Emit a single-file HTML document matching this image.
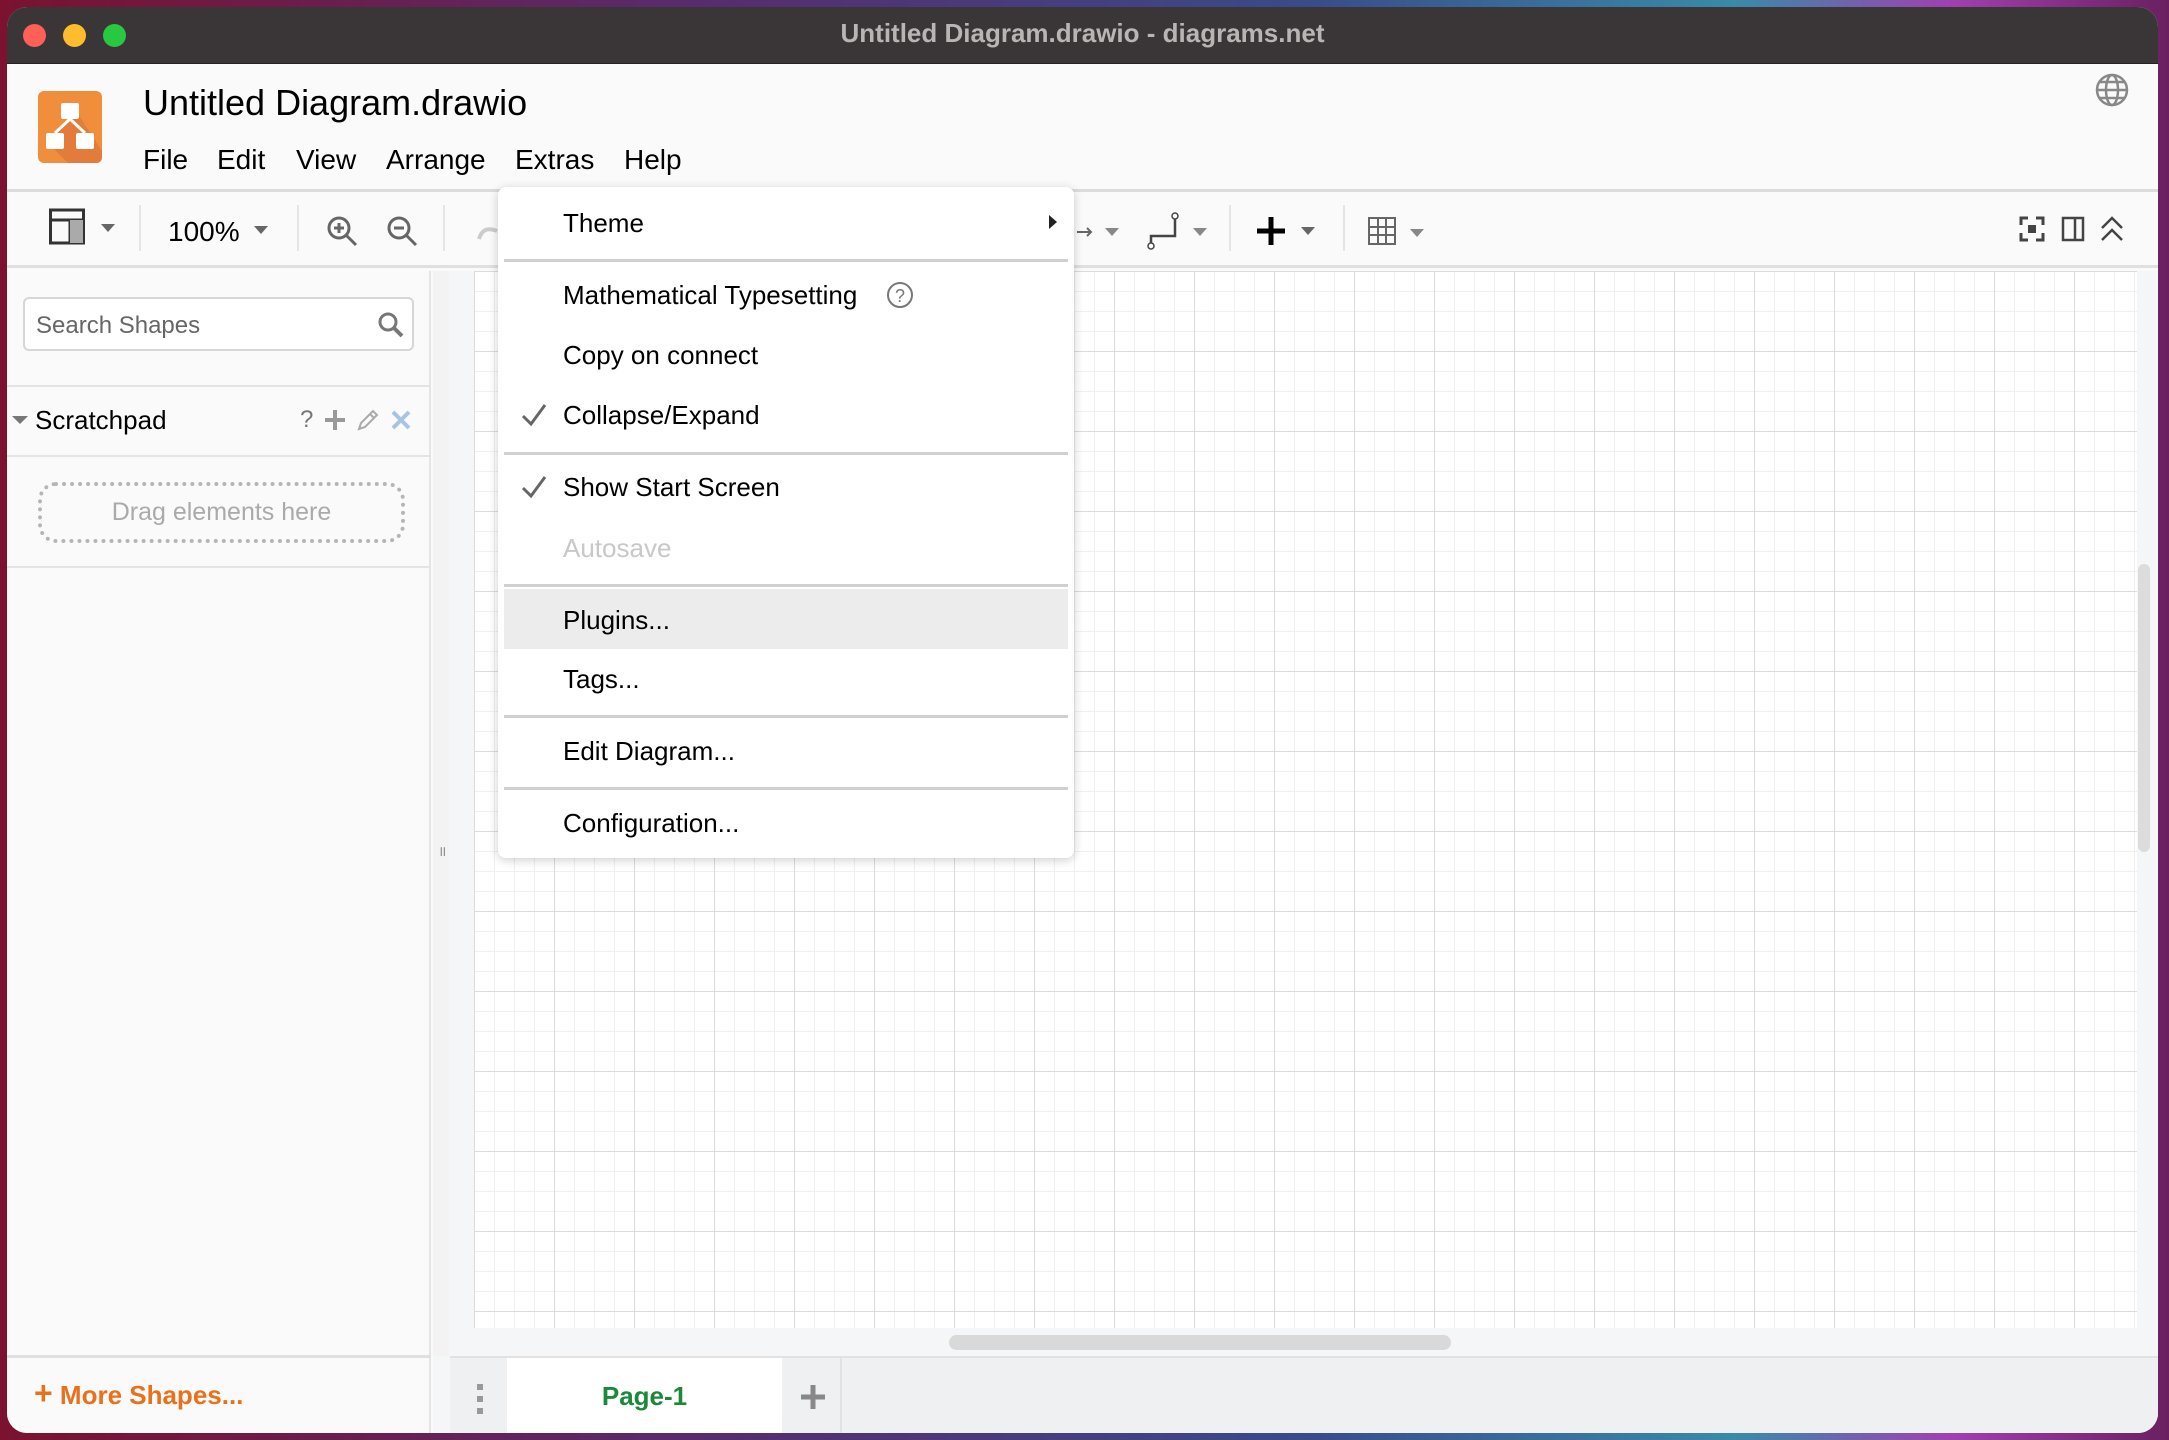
<!DOCTYPE html>
<html><head><meta charset="utf-8"><style>
*{margin:0;padding:0;box-sizing:border-box}
body{width:2169px;height:1440px;overflow:hidden;position:relative;font-family:"Liberation Sans",Arial,sans-serif;background:linear-gradient(90deg,#7a1230 0%,#5a2a6a 30%,#3a4a8a 60%,#3a8aa8 80%,#a040b0 90%,#6a2060 100%)}
.a{position:absolute}
.win{left:7px;top:7px;width:2151px;height:1426px;border-radius:20px;overflow:hidden;background:#fafafa}
.mi{position:absolute;left:65px;font-size:26px;color:#000;line-height:30px}
.sep{position:absolute;left:6px;width:564px;height:3px;background:#d0d0d0}
</style></head><body>
<div class="a win">
 <div class="a" style="left:0;top:0;width:2151px;height:57px;background:#3a3536;border-bottom:1px solid #222"></div>
 <div class="a" style="left:16px;top:17px;width:23px;height:23px;border-radius:50%;background:#fe5f57"></div>
 <div class="a" style="left:56px;top:17px;width:23px;height:23px;border-radius:50%;background:#febc2e"></div>
 <div class="a" style="left:96px;top:17px;width:23px;height:23px;border-radius:50%;background:#28c840"></div>
 <div class="a" style="left:0;top:11px;width:2151px;text-align:center;font-size:26px;font-weight:bold;color:#b9b5b5;line-height:30px">Untitled Diagram.drawio - diagrams.net</div>
 <div class="a" style="left:0;top:57px;width:2151px;height:128px;background:#fafafa;border-bottom:3px solid #dcdcdc"></div>
 <svg class="a" style="left:31px;top:84px" width="64" height="72" viewBox="0 0 64 72">
  <rect width="64" height="72" rx="6" fill="#f08e3c"/>
  <path d="M38 20 L64 60 L64 66 Q64 72 58 72 L30 72 L10 52 Z" fill="#e0783a" opacity=".8"/>
  <rect x="23" y="12" width="18" height="16" rx="2" fill="#fff"/>
  <rect x="8" y="42" width="18" height="16" rx="2" fill="#fff"/>
  <rect x="38" y="42" width="18" height="16" rx="2" fill="#fff"/>
  <path d="M32 28 L17 42 M32 28 L47 42" stroke="#fff" stroke-width="3"/>
 </svg>
 <div class="a" style="left:136px;top:75px;font-size:36px;line-height:42px;color:#000">Untitled Diagram.drawio</div>
 <div class="a" style="left:136px;top:137px;font-size:28px;line-height:32px;color:#000">
  <span class="a" style="left:0">File</span><span class="a" style="left:74px">Edit</span><span class="a" style="left:153px">View</span><span class="a" style="left:243px">Arrange</span><span class="a" style="left:372px">Extras</span><span class="a" style="left:481px">Help</span>
 </div>
 <svg class="a" style="left:2088px;top:66px" width="34" height="34" viewBox="0 0 34 34" fill="none" stroke="#888" stroke-width="2.5"><circle cx="17" cy="17" r="15"/><ellipse cx="17" cy="17" rx="6" ry="15"/><path d="M2 17H32M5 9H29M5 25H29"/></svg>
 <div class="a" style="left:0;top:188px;width:2151px;height:73px;background:#fafafa;border-bottom:3px solid #e0e0e0"></div>
 <svg class="a" style="left:42px;top:200px" width="80" height="40" viewBox="0 0 80 40"><rect x="1.5" y="3" width="33" height="33" fill="none" stroke="#333" stroke-width="3"/><path d="M1.5 13H34M21 13V36" stroke="#333" stroke-width="3"/><rect x="21" y="13" width="13" height="23" fill="#aaa"/><path d="M52 17h14l-7 8z" fill="#666"/></svg>
 <div class="a" style="left:132px;top:198px;width:2px;height:46px;background:#e5e5e5"></div>
 <div class="a" style="left:161px;top:209px;font-size:28px;line-height:32px;color:#000">100%</div>
 <svg class="a" style="left:245px;top:217px" width="20" height="12"><path d="M2 2h14l-7 8z" fill="#666"/></svg>
 <div class="a" style="left:290px;top:198px;width:2px;height:46px;background:#e5e5e5"></div>
 <svg class="a" style="left:318px;top:207px" width="36" height="36" viewBox="0 0 36 36" fill="none" stroke="#666" stroke-width="3"><circle cx="14" cy="14" r="10"/><path d="M21 21l10 10M9 14h10M14 9v10" /></svg>
 <svg class="a" style="left:378px;top:207px" width="36" height="36" viewBox="0 0 36 36" fill="none" stroke="#666" stroke-width="3"><circle cx="14" cy="14" r="10"/><path d="M21 21l10 10M9 14h10"/></svg>
 <div class="a" style="left:436px;top:198px;width:2px;height:46px;background:#e5e5e5"></div>
 <svg class="a" style="left:466px;top:210px" width="30" height="30"><path d="M6 22 Q10 8 24 14" stroke="#ccc" stroke-width="4" fill="none"/></svg>
 <svg class="a" style="left:1068px;top:211px" width="50" height="28"><path d="M2 14h14M12 10l4 4-4 4" stroke="#666" stroke-width="2" fill="none"/><path d="M30 10h14l-7 8z" fill="#888"/></svg>
 <svg class="a" style="left:1138px;top:203px" width="70" height="42"><path d="M6 38V26h24V6" stroke="#444" stroke-width="2.5" fill="none"/><circle cx="6" cy="36" r="3" fill="#fff" stroke="#444" stroke-width="1.5"/><circle cx="30" cy="6" r="3" fill="#fff" stroke="#444" stroke-width="1.5"/><path d="M48 18h14l-7 8z" fill="#888"/></svg>
 <div class="a" style="left:1222px;top:198px;width:2px;height:46px;background:#e5e5e5"></div>
 <svg class="a" style="left:1250px;top:207px" width="70" height="34"><path d="M14 3v28M0 17h28" stroke="#000" stroke-width="5"/><path d="M44 13h14l-7 8z" fill="#666"/></svg>
 <div class="a" style="left:1336px;top:198px;width:2px;height:46px;background:#e5e5e5"></div>
 <svg class="a" style="left:1361px;top:210px" width="70" height="30"><rect x="1" y="1" width="26" height="26" fill="none" stroke="#666" stroke-width="2"/><path d="M10 1v26M18 1v26M1 10h26M1 18h26" stroke="#666" stroke-width="2"/><path d="M42 12h14l-7 8z" fill="#888"/></svg>
 <svg class="a" style="left:2012px;top:209px" width="26" height="26" fill="none" stroke="#444" stroke-width="3"><path d="M2 9V2h7M17 2h7v7M24 17v7h-7M9 24H2v-7"/><rect x="9" y="9" width="8" height="8" fill="#444" stroke="none"/></svg>
 <svg class="a" style="left:2054px;top:209px" width="24" height="26" fill="none" stroke="#444" stroke-width="2.5"><rect x="2" y="2" width="20" height="22"/><path d="M14 2v22"/></svg>
 <svg class="a" style="left:2092px;top:207px" width="26" height="28" fill="none" stroke="#444" stroke-width="2.5"><path d="M3 14l10-10 10 10M3 26l10-10 10 10"/></svg>
 <div class="a" style="left:0;top:264px;width:424px;height:1162px;background:#fafafa;border-right:2px solid #e4e4e4"></div>
 <div class="a" style="left:16px;top:290px;width:391px;height:54px;border:2px solid #d6d6d6;border-radius:6px;background:#fff"></div>
 <div class="a" style="left:29px;top:305px;font-size:24px;line-height:28px;color:#666">Search Shapes</div>
 <svg class="a" style="left:370px;top:304px" width="28" height="28" fill="none" stroke="#777" stroke-width="3"><circle cx="11" cy="11" r="8"/><path d="M17 17l8 8" stroke-width="4"/></svg>
 <div class="a" style="left:0;top:378px;width:424px;height:2px;background:#e4e4e4"></div>
 <svg class="a" style="left:4px;top:407px" width="18" height="12"><path d="M1 2h16l-8 8z" fill="#777"/></svg>
 <div class="a" style="left:28px;top:398px;font-size:26px;line-height:30px;color:#000">Scratchpad</div>
 <div class="a" style="left:293px;top:398px;font-size:24px;line-height:30px;color:#777">?</div>
 <svg class="a" style="left:316px;top:401px" width="24" height="24"><path d="M12 2v20M2 12h20" stroke="#999" stroke-width="4"/></svg>
 <svg class="a" style="left:348px;top:400px" width="26" height="26" fill="none" stroke="#aaa" stroke-width="2"><path d="M4 22l2-6L18 4l4 4L10 20z M15 7l4 4"/></svg>
 <svg class="a" style="left:383px;top:402px" width="22" height="22"><path d="M3 3l16 16M19 3L3 19" stroke="#a8c4e0" stroke-width="4"/></svg>
 <div class="a" style="left:0;top:448px;width:424px;height:2px;background:#e4e4e4"></div>
 <div class="a" style="left:31px;top:475px;width:367px;height:61px;border:4px dotted #b5b5b5;border-radius:18px"></div>
 <div class="a" style="left:31px;top:490px;width:367px;text-align:center;font-size:25px;line-height:30px;color:#aaa">Drag elements here</div>
 <div class="a" style="left:0;top:559px;width:424px;height:2px;background:#e4e4e4"></div>
 <div class="a" style="left:0;top:1348px;width:424px;height:3px;background:#e0e0e0"></div>
 <div class="a" style="left:27px;top:1371px;font-size:26px;line-height:30px;color:#e8711c;font-weight:bold"><span style="font-size:32px">+</span> More Shapes...</div>
 <div class="a" style="left:426px;top:264px;width:1725px;height:1162px;background:#f5f6f7"></div>
 <div class="a" style="left:426px;top:264px;width:16px;height:1085px;background:#f3f3f3"></div>
 <div class="a" style="left:431px;top:835px;font-size:14px;color:#888">॥</div>
 <div class="a" style="left:467px;top:264px;width:1663px;height:1057px;background-color:#fff;
   background-image:linear-gradient(#dcdcdc 1px,transparent 1px),linear-gradient(90deg,#dcdcdc 1px,transparent 1px),linear-gradient(#f0f0f0 1px,transparent 1px),linear-gradient(90deg,#f0f0f0 1px,transparent 1px);
   background-size:80px 80px,80px 80px,20px 20px,20px 20px"></div>
 <div class="a" style="left:942px;top:1328px;width:502px;height:15px;border-radius:8px;background:#d9d9d9"></div>
 <div class="a" style="left:2131px;top:557px;width:12px;height:288px;border-radius:6px;background:#dcdcdc"></div>
 <div class="a" style="left:443px;top:1349px;width:1708px;height:77px;background:#eef0f1;border-top:2px solid #e2e2e2"></div>
 <div class="a" style="left:470px;top:1377px;width:6px;height:30px;background:repeating-linear-gradient(#999 0 6px,transparent 6px 12px)"></div>
 <div class="a" style="left:500px;top:1351px;width:275px;height:75px;background:#fff"></div>
 <div class="a" style="left:500px;top:1374px;width:275px;text-align:center;font-size:26px;line-height:30px;font-weight:bold;color:#1a8a3a">Page-1</div>
 <svg class="a" style="left:792px;top:1376px" width="28" height="28"><path d="M14 2v24M2 14h24" stroke="#888" stroke-width="5"/></svg>
 <div class="a" style="left:833px;top:1351px;width:2px;height:75px;background:#e2e2e2"></div>
 <div class="a" style="left:491px;top:180px;width:576px;height:671px;background:#fff;border-radius:8px;box-shadow:0 2px 10px rgba(0,0,0,.2)">
  <div class="mi" style="top:21px">Theme</div>
  <svg class="a" style="left:550px;top:27px" width="10" height="16"><path d="M1 1l8 7-8 7z" fill="#222"/></svg>
  <div class="sep" style="top:72px"></div>
  <div class="mi" style="top:93px">Mathematical Typesetting</div>
  <svg class="a" style="left:388px;top:94px" width="28" height="28" fill="none" stroke="#777" stroke-width="2"><circle cx="14" cy="14" r="12"/><text x="14" y="21" text-anchor="middle" font-size="18" fill="#777" stroke="none" font-family="Liberation Sans">?</text></svg>
  <div class="mi" style="top:153px">Copy on connect</div>
  <svg class="a" style="left:22px;top:215px" width="28" height="26"><path d="M3 14l8 8L25 3" stroke="#666" stroke-width="3" fill="none"/></svg>
  <div class="mi" style="top:213px">Collapse/Expand</div>
  <div class="sep" style="top:265px"></div>
  <svg class="a" style="left:22px;top:287px" width="28" height="26"><path d="M3 14l8 8L25 3" stroke="#666" stroke-width="3" fill="none"/></svg>
  <div class="mi" style="top:285px">Show Start Screen</div>
  <div class="mi" style="top:346px;color:#c8c8c8">Autosave</div>
  <div class="sep" style="top:397px"></div>
  <div class="a" style="left:6px;top:402px;width:564px;height:60px;background:#ececec"></div>
  <div class="mi" style="top:418px">Plugins...</div>
  <div class="mi" style="top:477px">Tags...</div>
  <div class="sep" style="top:528px"></div>
  <div class="mi" style="top:549px">Edit Diagram...</div>
  <div class="sep" style="top:600px"></div>
  <div class="mi" style="top:621px">Configuration...</div>
 </div>
</div>
</body></html>
